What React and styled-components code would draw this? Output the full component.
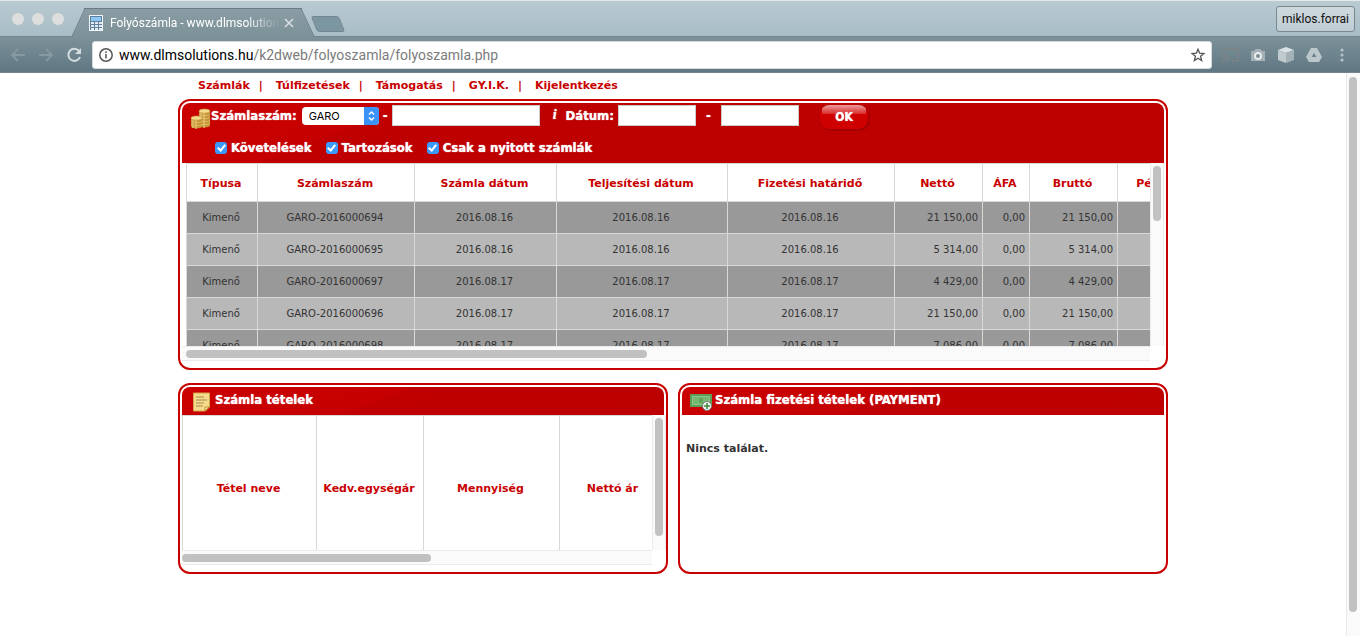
import React from "react";
import styled, { createGlobalStyle, css } from "styled-components";

const Global = createGlobalStyle`
  *, *::before, *::after { box-sizing: border-box; }
  html, body, #root { height: 100%; }
  body { margin: 0; background: #fff; font-family: "DejaVu Sans", Verdana, sans-serif; overflow: hidden; }
`;

const Browser = styled.div`
  display: flex;
  flex-direction: column;
  min-height: 100vh;
  border-top: 1px solid #e4eaec;
`;

const TabStrip = styled.div`
  display: flex;
  align-items: flex-end;
  height: 36px;
  padding: 0 5px 0 12px;
  background: linear-gradient(#b9cad1, #a8bdc6);
  border-bottom: 1px solid #75878e;
`;

const Lights = styled.div`
  display: flex;
  gap: 8px;
  padding-bottom: 11px;
`;

const Light = styled.span`
  width: 12px;
  height: 12px;
  border-radius: 50%;
  background: #dedede;
`;

const Tab = styled.div`
  position: relative;
  display: flex;
  align-items: center;
  width: 218px;
  height: 29px;
  margin: 0 0 -1px 20px;
  padding: 0 4px;
  color: #fff;
  font: 12px/28px Roboto, sans-serif;
  background: linear-gradient(#8a9da4, #7c9199);
  border-top: 1px solid #6b7d84;
  &::before, &::after {
    content: "";
    position: absolute;
    top: -1px;
    bottom: 0;
    width: 14px;
    background: linear-gradient(#8a9da4, #7c9199);
    border-top: 1px solid #6b7d84;
  }
  &::before { left: -6px; transform: skewX(-25deg); border-left: 1px solid #6b7d84; }
  &::after { right: -6px; transform: skewX(25deg); border-right: 1px solid #6b7d84; }
  > * { position: relative; z-index: 1; }
`;

const TabTitle = styled.span`
  flex: 1;
  margin-left: 6px;
  overflow: hidden;
  white-space: nowrap;
  mask-image: linear-gradient(to right, #000 80%, transparent);
`;

const PlainButton = styled.button`
  display: flex;
  align-items: center;
  justify-content: center;
  flex: none;
  width: 18px;
  height: 18px;
  padding: 0;
  border: 0;
  background: none;
`;

const NewTab = styled.button`
  width: 28px;
  height: 16px;
  margin: 0 0 4px 12px;
  padding: 0;
  border: 1px solid #74878f;
  border-radius: 3px;
  background: #7d97a2;
  transform: skewX(22deg);
`;

const Profile = styled.button`
  height: 26px;
  margin: 0 0 4px auto;
  padding: 0 5px;
  border: 1px solid #78888f;
  border-radius: 3px;
  background: linear-gradient(#ced9de, #bfcdd4);
  color: #111;
  font: 12px Roboto, sans-serif;
`;

const Toolbar = styled.div`
  display: flex;
  align-items: center;
  height: 36px;
  padding: 0 9px;
  background: linear-gradient(#7c9199, #607883);
  border-bottom: 1px solid #71868f;
`;

const NavButtons = styled.div`
  display: flex;
  gap: 10px;
  margin-right: 9px;
`;

const Omnibox = styled.form`
  display: flex;
  align-items: center;
  flex: 1;
  height: 28px;
  padding: 0 4px;
  border: 1px solid #d5dadc;
  border-radius: 3px;
  background: #fff;
`;

const Url = styled.div`
  flex: 1;
  margin-left: 4px;
  color: #7b7b7b;
  font: 14px Roboto, sans-serif;
  b { color: #000; font-weight: 400; }
`;

const Extensions = styled.div`
  display: flex;
  gap: 10px;
  margin-left: 9px;
`;

const Viewport = styled.div`
  display: flex;
  flex: 1;
`;

const Page = styled.main`
  flex: 1;
  min-width: 0;
`;

const Content = styled.div`
  max-width: 990px;
  margin: 0 auto;
`;

const Menu = styled.nav`
  display: flex;
  height: 26px;
  padding: 0 20px;
  color: #c00000;
  font: bold 11px/26px "DejaVu Sans", Verdana, sans-serif;
`;

const MenuLink = styled.a`
  color: #c80000;
  text-decoration: none;
  & + &::before { content: "|"; margin: 0 13px 0 9px; }
`;

const Columns = styled.div`
  display: grid;
  grid-template-columns: 1fr 1fr;
  gap: 10px;
  margin-top: 13px;
`;

const Panel = styled.section`
  min-width: 0;
  min-height: ${(p) => p.$h}px;
  padding: 2px 2px 7px;
  border: 2px solid #c80000;
  border-radius: 12px;
`;

const redBar = css`
  border-radius: 8px 8px 0 0;
  background: linear-gradient(159deg, #cb0000 0, #c60000 82px, #c00000 84px, #bd0000 180px);
  color: #fff;
  font: bold 13px "DejaVu Sans Condensed", "DejaVu Sans", Tahoma, sans-serif;
  text-shadow: 0 0 1px #fff;
`;

const Filters = styled.form`
  ${redBar}
  height: 60px;
  padding: 0 8px;
`;

const FilterRow = styled.div`
  display: flex;
  align-items: center;
  height: 24px;
`;

const CheckRow = styled.div`
  display: flex;
  align-items: center;
  gap: 14px;
  height: 40px;
  padding-left: 25px;
`;

const CheckLabel = styled.label`
  display: flex;
  align-items: center;
  gap: 4px;
`;

const Check = styled.input`
  display: flex;
  justify-content: center;
  width: 12px;
  height: 12px;
  margin: 1px 0 0;
  appearance: none;
  border-radius: 3px;
  background: #3b99fc;
  &:checked::before {
    content: "";
    width: 5px;
    height: 8px;
    margin-top: 1px;
    border: solid #fff;
    border-width: 0 2px 2px 0;
    transform: rotate(40deg);
  }
`;

const SelectBox = styled.span`
  position: relative;
  display: flex;
  margin: 2px 4px 0 5px;
  svg { position: absolute; right: 0; top: 0; pointer-events: none; }
`;

const Select = styled.select`
  width: 77px;
  height: 18px;
  padding: 0 7px;
  appearance: none;
  border: 0;
  border-radius: 4px;
  background: #fff;
  color: #000;
  font: 11px Inter, sans-serif;
`;

const Field = styled.input`
  width: ${(p) => p.$w}px;
  height: 21px;
  padding: 0 3px;
  border: 1px solid #ccc;
  background: #fff;
`;

const Gap = styled.span`
  width: ${(p) => p.$w}px;
  text-align: center;
`;

const Info = styled.i`
  width: 26px;
  padding-left: 4px;
  text-align: center;
  font: italic bold 14px "Liberation Serif", serif;
`;

const Submit = styled.button`
  width: 48px;
  height: 24px;
  margin: 4px 0 0 21px;
  padding: 0;
  border: 0;
  border-radius: 9px;
  background:
    linear-gradient(#ee9c9c, #d82a2a) 50% 0 / 44px 9px no-repeat,
    #cf0000;
  box-shadow: 1px 1px 2px #900000;
  color: #fff;
  font: bold 12px "DejaVu Sans Condensed", sans-serif;
  text-shadow: 0 0 1px #fff;
`;

const TitleBar = styled.h2`
  ${redBar}
  display: flex;
  align-items: center;
  gap: 3px;
  height: 28px;
  margin: 0;
  padding: 0 8px;
  svg { margin-top: 2px; }
  span { margin-top: -4px; }
`;

const ScrollGrid = styled.div`
  display: grid;
  grid-template-columns: minmax(0, 1fr) 14px;
  grid-template-rows: ${(p) => p.$h}px 15px;
  margin-right: ${(p) => (p.$wide ? -2 : 0)}px;
`;

const Clip = styled.div`
  overflow: hidden;
  padding-left: ${(p) => p.$inset || 0}px;
`;

const TrackV = styled.div`
  padding: 3px 2px;
  border: solid #ebebeb;
  border-width: 0 1px;
  background: #fafafa;
`;

const TrackH = styled.div`
  padding: 3px ${(p) => p.$inset || 0}px;
  border: solid #ebebeb;
  border-width: 1px 0;
  background: #fafafa;
`;

const Thumb = styled.div`
  width: ${(p) => p.$w};
  height: ${(p) => p.$h};
  border-radius: 4px;
  background: #c1c1c1;
`;

const Table = styled.table`
  table-layout: fixed;
  width: ${(p) => p.$w}px;
  border-collapse: collapse;
  border: 1px solid #d8d8d8;
`;

const Th = styled.th`
  height: ${(p) => p.$h}px;
  padding: 2px 2px 0 0;
  border: 1px solid #d8d8d8;
  color: #c80000;
  font: bold 11px "DejaVu Sans", Verdana, sans-serif;
  white-space: nowrap;
`;

const Td = styled.td`
  height: 32px;
  padding: 0 4px 0 2px;
  border: 1px solid #d8d8d8;
  color: #333;
  font-size: 10px;
  text-align: ${(p) => (p.$num ? "right" : "center")};
`;

const Row = styled.tr`
  background: #b8b8b8;
  &:nth-child(odd) { background: #999; }
`;

const Empty = styled.p`
  margin: 27px 4px;
  color: #333;
  font: bold 11px/14px "DejaVu Sans", Verdana, sans-serif;
`;

const PageScroll = styled.div`
  width: 14px;
  padding: 4px 2px;
  border-left: 1px solid #e8e8e8;
  background: #fafafa;
`;

const invoiceCols = [
  ["Típusa", 71], ["Számlaszám", 157], ["Számla dátum", 142], ["Teljesítési dátum", 171],
  ["Fizetési határidő", 167], ["Nettó", 88], ["ÁFA", 47], ["Bruttó", 88], ["Pénznem", 96],
];

const invoices = [
  ["GARO-2016000694", "2016.08.16", "21 150,00"],
  ["GARO-2016000695", "2016.08.16", "5 314,00"],
  ["GARO-2016000697", "2016.08.17", "4 429,00"],
  ["GARO-2016000696", "2016.08.17", "21 150,00"],
  ["GARO-2016000698", "2016.08.17", "7 086,00"],
];

const itemCols = [["Tétel neve", 134], ["Kedv.egységár", 107], ["Mennyiség", 136], ["Nettó ár", 108]];

const sum = (cols) => cols.reduce((t, c) => t + c[1], 0);

const Cols = ({ cols }) => (
  <colgroup>{cols.map(([n, w]) => <col key={n} style={{ width: w }} />)}</colgroup>
);

const CalcIcon = () => (
  <svg width="16" height="18" viewBox="0 0 16 18">
    <rect x="1.500" y="1.500" width="13" height="15" fill="#5d7f9b" stroke="#f2f5f7" />
    <rect x="3" y="3" width="10" height="4" fill="#8cc6f2" />
    {[9, 12, 15].map((y) => [3, 7, 11].map((x) => <rect key={`${x}-${y}`} x={x} y={y - 1} width="3" height="2" fill="#e3ecf3" />))}
  </svg>
);

const Pile = ({ x, rows }) => rows.map((y) => (
  <g key={y}>
    <path d={`M${x} ${y}v2.500c0 2.600 11 2.600 11 0V${y}z`} fill="#c8963a" />
    <path d={`M${x + 2} ${y + 1}v3M${x + 5} ${y + 2}v3`} stroke="#f1d68a" />
    <ellipse cx={x + 5.5} cy={y} rx="5.500" ry="2" fill="#f3dc8e" stroke="#c99c3f" strokeWidth="0.600" />
  </g>
));

const Coins = () => (
  <svg width="21" height="22" viewBox="0 0 21 22">
    <Pile x={9} rows={[16, 13, 10, 7, 4]} />
    <Pile x={1} rows={[17, 14, 11]} />
  </svg>
);

const CoinSlot = styled.span`
  display: flex;
  width: 21px;
  margin-top: 6px;
`;

const NoteIcon = () => (
  <svg width="22" height="20" viewBox="0 0 22 20">
    <path d="M3.500 1h16v14l-4 4h-12z" fill="#f4dc8c" stroke="#cfa548" />
    <path d="M6 5h8M6 8h11M6 11h8M6 14h7" stroke="#a88a4c" />
    <path d="M15 19v-4h4z" fill="#fff3bf" stroke="#c08e28" />
  </svg>
);

const MoneyIcon = () => (
  <svg width="22" height="20" viewBox="0 0 22 20">
    <rect y="2" width="22" height="13" fill="#5a9e58" />
    <rect x="2.500" y="4.500" width="17" height="8" fill="#74b871" stroke="#8cc58a" />
    <path d="M9 6h4v5H9z" fill="#5fa65d" />
    <circle cx="17" cy="14" r="4.500" fill="#f3f7f3" stroke="#777" />
    <path d="M17 11v6M14 14h6" stroke="#3f8a3d" strokeWidth="1.600" />
  </svg>
);

const Arrow = ({ back }) => (
  <svg width="18" height="18" viewBox="0 0 18 18" fill="none" stroke="#8599a1" strokeWidth="1.800">
    <path d={back ? "M16 9H3M9 3L3 9l6 6" : "M2 9h13M9 3l6 6-6 6"} />
  </svg>
);

export default function App() {
  return (
    <>
      <Global />
      <Browser>
        <TabStrip>
          <Lights><Light /><Light /><Light /></Lights>
          <Tab>
            <CalcIcon />
            <TabTitle>Folyószámla - www.dlmsolutions</TabTitle>
            <PlainButton aria-label="Close tab">
              <svg width="10" height="10" viewBox="0 0 10 10" stroke="#d7dfe2" strokeWidth="1.6"><path d="M1 1l8 8M9 1L1 9" /></svg>
            </PlainButton>
          </Tab>
          <NewTab aria-label="New tab" />
          <Profile>miklos.forrai</Profile>
        </TabStrip>
        <Toolbar>
          <NavButtons>
            <PlainButton aria-label="Back"><Arrow back /></PlainButton>
            <PlainButton aria-label="Forward"><Arrow /></PlainButton>
            <PlainButton aria-label="Reload">
              <svg width="18" height="18" viewBox="0 0 18 18" fill="none" stroke="#d3dcdf" strokeWidth="2"><path d="M14 5A6 6 0 1 0 15 11" /><path d="M16 2v6h-6z" fill="#d3dcdf" stroke="none" /></svg>
            </PlainButton>
          </NavButtons>
          <Omnibox>
            <PlainButton type="button" aria-label="Site information">
              <svg width="16" height="16" viewBox="0 0 16 16" fill="none" stroke="#555" strokeWidth="1.5"><circle cx="8" cy="8" r="6.200" /><path d="M8 7v4.500M8 4.300v1.600" /></svg>
            </PlainButton>
            <Url><b>www.dlmsolutions.hu</b>/k2dweb/folyoszamla/folyoszamla.php</Url>
            <PlainButton type="button" aria-label="Bookmark">
              <svg width="16" height="16" viewBox="-1 -1 18 18" fill="none" stroke="#555" strokeWidth="1.5"><path d="M8 1.500l1.800 4.500 4.800.4-3.700 3.100 1.200 4.700L8 11.700l-4.100 2.500 1.200-4.700L1.400 6.400l4.800-.4z" /></svg>
            </PlainButton>
          </Omnibox>
          <Extensions>
            <PlainButton aria-label="Cast">
              <svg width="18" height="18" viewBox="0 0 18 18" fill="none" stroke="#7f8486" strokeWidth="1.5"><path d="M1 5V3h16v12h-6M1 8a7 7 0 0 1 7 7M1 11a4 4 0 0 1 4 4" /><path d="M1 13.500v1.500h1.500" /></svg>
            </PlainButton>
            <PlainButton aria-label="Capture">
              <svg width="16" height="16" viewBox="0 0 16 16"><path d="M1 4h3l1.500-2h5L12 4h3v10H1z" fill="#a5b1b6" /><circle cx="8" cy="9" r="3" fill="#7d8e95" stroke="#e8edef" strokeWidth="2" /></svg>
            </PlainButton>
            <PlainButton aria-label="Package">
              <svg width="18" height="18" viewBox="0 0 18 18"><path d="M9 1l8 3-8 3-8-3z" fill="#d9e1e4" /><path d="M1 4l8 3v10l-8-3z" fill="#c0cbcf" /><path d="M17 4L9 7v10l8-3z" fill="#a4b2b8" /></svg>
            </PlainButton>
            <PlainButton aria-label="Drive">
              <svg width="18" height="18" viewBox="0 0 18 18"><path d="M6 2h6l5 9-3 5H4l-3-5z" fill="#bcc7cb" /><path d="M9 7l2.500 4h-5z" fill="#6b818b" /></svg>
            </PlainButton>
            <PlainButton aria-label="Menu">
              <svg width="6" height="16" viewBox="0 0 6 16" fill="#b6c2c7"><circle cx="3" cy="3" r="1.600" /><circle cx="3" cy="8" r="1.600" /><circle cx="3" cy="13" r="1.600" /></svg>
            </PlainButton>
          </Extensions>
        </Toolbar>
        <Viewport>
          <Page>
            <Content>
              <Menu>
                {["Számlák", "Túlfizetések", "Támogatás", "GY.I.K.", "Kijelentkezés"].map((t) => <MenuLink key={t} href="#">{t}</MenuLink>)}
              </Menu>
              <Panel $h={271}>
                <Filters>
                  <FilterRow>
                    <CoinSlot><Coins /></CoinSlot>
                    <label htmlFor="prefix">Számlaszám:</label>
                    <SelectBox>
                      <Select id="prefix"><option>GARO</option></Select>
                      <svg width="15" height="18" viewBox="0 0 15 18"><path d="M0 0h11a4 4 0 0 1 4 4v10a4 4 0 0 1-4 4H0z" fill="#3b93f7" /><path d="M5 7.500L7.500 5 10 7.500M5 10.500L7.500 13l2.500-2.500" fill="none" stroke="#fff" strokeWidth="1.300" /></svg>
                    </SelectBox>
                    -
                    <Gap $w={4} />
                    <Field $w={148} aria-label="Számlaszám" />
                    <Info>i</Info>
                    <label htmlFor="from">Dátum:</label>
                    <Gap $w={4} />
                    <Field id="from" $w={78} />
                    <Gap $w={25}>-</Gap>
                    <Field $w={78} aria-label="Dátum vége" />
                    <Submit type="button">OK</Submit>
                  </FilterRow>
                  <CheckRow>
                    {["Követelések", "Tartozások", "Csak a nyitott számlák"].map((t) => (
                      <CheckLabel key={t}><Check type="checkbox" defaultChecked />{t}</CheckLabel>
                    ))}
                  </CheckRow>
                </Filters>
                <ScrollGrid $h={183}>
                  <Clip $inset={4}>
                    <Table $w={sum(invoiceCols)}>
                      <Cols cols={invoiceCols} />
                      <thead><tr>{invoiceCols.map(([n]) => <Th key={n} $h={38}>{n}</Th>)}</tr></thead>
                      <tbody>
                        {invoices.map(([no, date, amount]) => (
                          <Row key={no}>
                            <Td>Kimenő</Td><Td>{no}</Td><Td>{date}</Td><Td>{date}</Td><Td>{date}</Td>
                            <Td $num>{amount}</Td><Td $num>0,00</Td><Td $num>{amount}</Td><Td />
                          </Row>
                        ))}
                      </tbody>
                    </Table>
                  </Clip>
                  <TrackV><Thumb $w="8px" $h="55px" /></TrackV>
                  <TrackH $inset={4}><Thumb $w="48%" $h="8px" /></TrackH>
                </ScrollGrid>
              </Panel>
              <Columns>
                <Panel $h={191}>
                  <TitleBar><NoteIcon /><span>Számla tételek</span></TitleBar>
                  <ScrollGrid $h={135} $wide>
                    <Clip>
                      <Table $w={sum(itemCols)}>
                        <Cols cols={itemCols} />
                        <thead><tr>{itemCols.map(([n]) => <Th key={n} $h={144}>{n}</Th>)}</tr></thead>
                      </Table>
                    </Clip>
                    <TrackV><Thumb $w="8px" $h="118px" /></TrackV>
                    <TrackH><Thumb $w="53%" $h="8px" /></TrackH>
                  </ScrollGrid>
                </Panel>
                <Panel $h={191}>
                  <TitleBar><MoneyIcon /><span>Számla fizetési tételek (PAYMENT)</span></TitleBar>
                  <Empty>Nincs találat.</Empty>
                </Panel>
              </Columns>
            </Content>
          </Page>
          <PageScroll><Thumb $w="8px" $h="535px" /></PageScroll>
        </Viewport>
      </Browser>
    </>
  );
}
